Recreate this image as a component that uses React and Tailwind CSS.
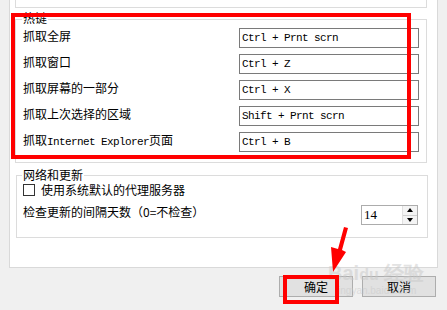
const hotkeys = [
  { label: "抓取全屏", value: "Ctrl + Prnt scrn" },
  { label: "抓取窗口", value: "Ctrl + Z" },
  { label: "抓取屏幕的一部分", value: "Ctrl + X" },
  { label: "抓取上次选择的区域", value: "Shift + Prnt scrn" },
  { label: null, value: "Ctrl + B" },
];

const mono = "font-['Liberation_Mono',monospace] text-[11px] tracking-[-0.6px]";

const HotkeyRow = ({ label, value }) => (
  <div className="flex items-start justify-between h-[20px]">
    <span className="leading-[14px] mt-[1px]">
      {label ?? (
        <>
          抓取<span className={mono}>Internet Explorer</span>页面
        </>
      )}
    </span>
    <div className={`w-[180px] h-[20px] border border-[#7a7a7a] bg-white pl-[2px] leading-[18px] ${mono}`}>
      {value}
    </div>
  </div>
);

const Spinner = () => (
  <div className="flex w-[57px] h-[20px] border border-[#acacac] bg-white">
    <span className="flex-1 pl-[2px] leading-[18px] font-['Liberation_Serif',serif] text-[13px]">
      14
    </span>
    <div className="flex flex-col w-[15px] border-l border-[#e0e0e0]">
      <div className="flex-1 flex items-center justify-center bg-[#f4f4f4] border-b border-[#d0d0d0]">
        <span className="w-0 h-0 border-x-[3px] border-x-transparent border-b-[4px] border-b-black" />
      </div>
      <div className="flex-1 flex items-center justify-center bg-[#f4f4f4]">
        <span className="w-0 h-0 border-x-[3px] border-x-transparent border-t-[4px] border-t-black" />
      </div>
    </div>
  </div>
);

const App = () => {
  return (
    <div className="relative w-[447px] h-[310px] overflow-hidden bg-[#f0f0f0] text-[12px] text-black font-['Noto_Sans_CJK_SC',sans-serif]">
      <div className="ml-[9px] mt-[-8px] w-[429px] h-[276px] bg-white border border-[#d9d9d9] pl-[5px]">
        <div className="w-[412px] h-[15px] border border-t-0 border-[#dcdcdc]" />

        <div className="relative mt-[11px] w-[412px] h-[144px] border border-[#dcdcdc] pt-[8px] px-[7px] flex flex-col gap-[6px]">
          <span className="absolute left-[6px] top-[-9px] bg-white px-[1px] leading-[14px]">
            热键
          </span>
          {hotkeys.map((h) => (
            <HotkeyRow key={h.value} label={h.label} value={h.value} />
          ))}
        </div>

        <div className="relative mt-[12px] ml-[1px] w-[412px] h-[63px] border border-[#dcdcdc] pt-[7px] pl-[6px] pr-[9px]">
          <span className="absolute left-[5px] top-[-8px] bg-white px-[1px] leading-[14px]">
            网络和更新
          </span>
          <div className="flex items-center gap-[6px] h-[14px]">
            <span className="w-[12px] h-[12px] border border-[#333] bg-white" />
            <span className="leading-[14px]">使用系统默认的代理服务器</span>
          </div>
          <div className="flex items-start justify-between mt-[8px]">
            <span className="leading-[14px]">检查更新的间隔天数（0=不检查）</span>
            <Spinner />
          </div>
        </div>
      </div>

      <div className="flex justify-end gap-[9px] pr-[11px] mt-[8px]">
        <button className="w-[74px] h-[21px] bg-[#e1e1e1] border border-[#adadad] text-[12px] leading-[19px]">
          确定
        </button>
        <button className="w-[74px] h-[21px] bg-[#e1e1e1] border border-[#adadad] text-[12px] leading-[19px]">
          取消
        </button>
      </div>

      {/* watermark */}
      <div className="absolute left-[328px] top-[262px] flex flex-col items-center text-[#c8c8c8] opacity-50 pointer-events-none">
        <span className="font-['Liberation_Sans',sans-serif] text-[20px] font-bold leading-[22px]">
          Bai<span className="text-[16px]">du</span> 经验
        </span>
        <span className="font-['Liberation_Sans',sans-serif] text-[10px] leading-[10px]">
          jingyan.baidu.com
        </span>
      </div>

      {/* annotations */}
      <div className="absolute left-[11px] top-[13px] w-[400px] h-[146px] border-[4px] border-[#ff0000] pointer-events-none" />
      <div className="absolute left-[283px] top-[275px] w-[56px] h-[29px] border-[4px] border-[#ff0000] pointer-events-none" />
      <svg className="absolute left-[325px] top-[225px]" width="28" height="50" viewBox="0 0 28 50">
        <polygon points="19,2 23,3 17,25 21,27 8,47 6,22 13,24" fill="#ff0000" />
      </svg>
    </div>
  );
};

export default App;
